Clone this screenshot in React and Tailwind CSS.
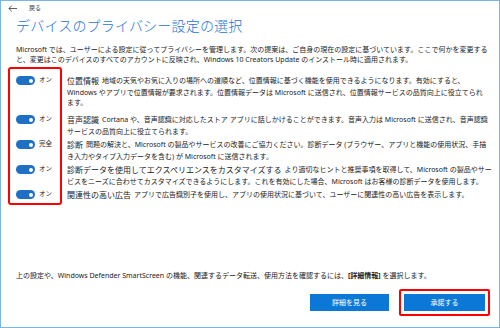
import React from 'react';

const settings = [
  {
    label: 'オン',
    title: '位置情報',
    lines: [
      '地域の天気やお気に入りの場所への道順など、位置情報に基づく機能を使用できるようになります。有効にすると、',
      'Windows やアプリで位置情報が要求されます。位置情報データは Microsoft に送信され、位置情報サービスの品質向上に役立てられ',
      'ます。',
    ],
  },
  {
    label: 'オン',
    title: '音声認識',
    lines: [
      'Cortana や、音声認識に対応したストア アプリに話しかけることができます。音声入力は Microsoft に送信され、音声認識',
      'サービスの品質向上に役立てられます。',
    ],
  },
  {
    label: '完全',
    title: '診断',
    lines: [
      '問題の解決と、Microsoft の製品やサービスの改善にご協力ください。診断データ (ブラウザー、アプリと機能の使用状況、手描',
      'き入力やタイプ入力データを含む) が Microsoft に送信されます。',
    ],
  },
  {
    label: 'オン',
    title: '診断データを使用してエクスペリエンスをカスタマイズする',
    lines: [
      'より適切なヒントと推奨事項を取得して、Microsoft の製品やサー',
      'ビスをニーズに合わせてカスタマイズできるようにします。これを有効にした場合、Microsoft はお客様の診断データを使用します。',
    ],
  },
  {
    label: 'オン',
    title: '関連性の高い広告',
    lines: ['アプリで広告識別子を使用し、アプリの使用状況に基づいて、ユーザーに関連性の高い広告を表示します。'],
  },
];

const Toggle = () => (
  <div className="w-[19px] h-[9px] rounded-full bg-[#1f6fc5] flex items-center justify-end pr-[2px]">
    <div className="w-[4px] h-[4px] rounded-full bg-white" />
  </div>
);

const SettingRow = ({ item, extra }) => (
  <div className={`flex ${extra || ''}`}>
    <div className="w-[51px] h-[15px] flex items-center shrink-0">
      <Toggle />
      <span className="ml-[4px] text-[6.5px] leading-none text-[#222]">{item.label}</span>
    </div>
    <div className="text-[7px] leading-[10px] text-[#222] whitespace-nowrap">
      <div className="h-[15px] flex items-center">
        <span className="text-[8px] mr-[3px]">{item.title}</span>
        <span>{item.lines[0]}</span>
      </div>
      {item.lines.slice(1).map((l, i) => (
        <div key={i}>{l}</div>
      ))}
    </div>
  </div>
);

export default function App() {
  return (
    <div
      className="w-[500px] h-[328px] border border-[#7db5e8] bg-white flex flex-col overflow-hidden"
      style={{ fontFamily: '"Noto Sans", "Noto Sans CJK JP", sans-serif' }}
    >
      <div className="h-[14px] flex items-center pl-[7px] shrink-0">
        <svg width="9" height="7" viewBox="0 0 9 7" fill="none" stroke="#333" strokeWidth="0.8">
          <path d="M9 3.5H1M3.8 0.6L0.9 3.5L3.8 6.4" />
        </svg>
        <span className="ml-[12px] text-[6px] leading-none text-[#333]">戻る</span>
      </div>

      <h1 className="pl-[15px] text-[14px] leading-[22px] text-[#1a73d8] font-light tracking-[0.2px]">
        デバイスのプライバシー設定の選択
      </h1>

      <p className="pl-[15px] mt-[8px] text-[7px] leading-[10px] text-[#222] whitespace-nowrap">
        Microsoft では、ユーザーによる設定に従ってプライバシーを管理します。次の提案は、ご自身の現在の設定に基づいています。ここで何かを変更する
        <br />
        と、変更はこのデバイスのすべてのアカウントに反映され、Windows 10 Creators Update のインストール時に適用されます。
      </p>

      <div className="relative mt-[8px] pl-[15px] flex flex-col">
        <div className="absolute left-[7px] top-[-6px] w-[54px] h-[138px] border-2 border-[#ff0000] rounded-[3px]" />
        {settings.map((s, i) => (
          <SettingRow key={i} item={s} extra={i === 0 ? 'mb-[4px]' : ''} />
        ))}
      </div>

      <div className="mt-auto pb-[11px] pr-[9px]">
        <p className="pl-[15px] text-[7px] leading-[10px] text-[#222] whitespace-nowrap">
          上の設定や、Windows Defender SmartScreen の機能、関連するデータ転送、使用方法を確認するには、
          <b className="font-bold">[詳細情報]</b> を選択します。
        </p>
        <div className="mt-[8px] flex justify-end items-center gap-[10px]">
          <button className="w-[79px] h-[17px] bg-[#0b78d7] text-white text-[7px] leading-none">
            詳細を見る
          </button>
          <div className="border-2 border-[#ff0000] rounded-[2px] p-[3px]">
            <button className="w-[81px] h-[17px] bg-[#0b78d7] text-white text-[7px] leading-none block">
              承諾する
            </button>
          </div>
        </div>
      </div>
    </div>
  );
}
